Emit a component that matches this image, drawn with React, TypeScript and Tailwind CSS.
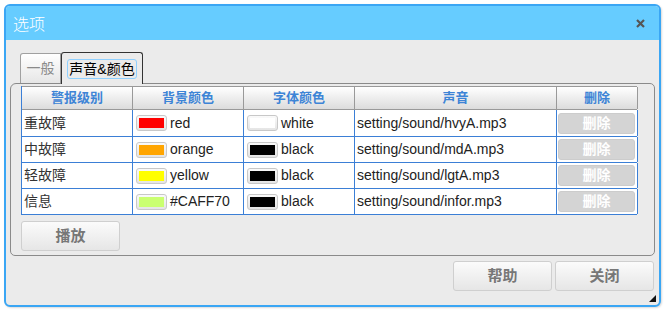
import React from "react";

const FONT = { fontFamily: '"Liberation Sans", Arial, "Noto Sans CJK SC", sans-serif' };

type Row = { level: string; bg: string; bgName: string; fg: string; fgName: string; sound: string };

const rows: Row[] = [
  { level: "重故障", bg: "#ff0000", bgName: "red", fg: "#ffffff", fgName: "white", sound: "setting/sound/hvyA.mp3" },
  { level: "中故障", bg: "#ffa500", bgName: "orange", fg: "#000000", fgName: "black", sound: "setting/sound/mdA.mp3" },
  { level: "轻故障", bg: "#ffff00", bgName: "yellow", fg: "#000000", fgName: "black", sound: "setting/sound/lgtA.mp3" },
  { level: "信息", bg: "#CAFF70", bgName: "#CAFF70", fg: "#000000", fgName: "black", sound: "setting/sound/infor.mp3" },
];

function Swatch({ color, name }: { color: string; name: string }) {
  return (
    <div className="flex items-center h-full pl-[3px]">
      <div className="w-[31px] h-[16px] rounded-[3px] border border-[#c8c8c8] bg-gradient-to-b from-[#fafafa] to-[#e4e4e4] flex items-center justify-center">
        <div className="w-[25px] h-[10px]" style={{ backgroundColor: color }} />
      </div>
      <span className="ml-[3px] text-[14px] text-[#222]">{name}</span>
    </div>
  );
}

function GrayButton({ label, w }: { label: string; w: string }) {
  return (
    <div
      className={`${w} h-[30px] rounded-[3px] border border-[#cfcfcf] bg-gradient-to-b from-[#fbfbfb] to-[#e6e6e6] flex items-center justify-center text-[15px] font-bold text-[#777]`}
    >
      {label}
    </div>
  );
}

export default function App() {
  const widths = ["w-[111px]", "w-[111px]", "w-[111px]", "w-[202px]", "w-[81px]"];
  const headers = ["警报级别", "背景颜色", "字体颜色", "声音", "删除"];
  return (
    <div className="w-[667px] h-[312px] bg-white relative" style={FONT}>
      <div className="absolute left-[4px] top-[4px] w-[657px] h-[303px] rounded-[6px] border-2 border-[#3aa6f4] bg-[#ebebeb] flex flex-col overflow-hidden shadow-[1px_1px_2px_rgba(0,0,0,0.15)]">
        {/* Title bar */}
        <div className="h-[34px] bg-[#66ccff] flex items-center justify-between pl-[7px] pr-[14px] shrink-0">
          <span className="text-white text-[16px] font-light" style={{ fontFamily: '"Noto Sans CJK SC", sans-serif' }}>
            选项
          </span>
          <svg width="9" height="9" viewBox="0 0 9 9">
            <path d="M1 1 L8 8 M8 1 L1 8" stroke="#555" strokeWidth="2.2" />
          </svg>
        </div>

        {/* Body */}
        <div className="flex-1 flex flex-col px-[4px] pt-[12px] relative">
          {/* Tabs */}
          <div className="flex items-end pl-[10px] h-[31px] relative z-10">
            <div className="w-[41px] h-[30px] border border-b-0 border-[#a0a0a0] rounded-tl-[3px] bg-gradient-to-b from-[#ffffff] to-[#e6e6e6] flex items-center justify-center text-[14px] text-[#8a8a8a]">
              一般
            </div>
            <div className="w-[82px] h-[32px] -mb-px border border-b-0 border-[#333] rounded-t-[3px] bg-[#ebebeb] flex items-center justify-center">
              <span className="px-[1px] h-[20px] leading-[18px] rounded-[3px] border border-[#8fd0ff] text-[14px] text-black">
                声音&amp;颜色
              </span>
            </div>
          </div>

          {/* Panel */}
          <div className="w-[645px] h-[173px] border border-[#8a8a8a] rounded-[5px] rounded-tl-[6px] pt-[2px] pl-[10px] flex flex-col">
            <div className="w-[616px] border-l border-[#3b7fd6]">
              {/* header */}
              <div className="flex h-[24px] border-t border-b border-[#999] bg-gradient-to-b from-[#ffffff] to-[#dcdcdc]">
                {headers.map((h, i) => (
                  <div
                    key={h}
                    className={`${widths[i]} shrink-0 border-r border-[#999] flex items-center justify-center text-[13px] font-bold text-[#3d84d6]`}
                  >
                    {h}
                  </div>
                ))}
              </div>
              {rows.map((r, idx) => (
                <div key={r.level} className={`flex ${idx === 0 ? "h-[27px]" : "h-[26px]"} border-b border-[#3b7fd6] bg-white`}>
                  <div className={`${widths[0]} shrink-0 border-r border-[#3b7fd6] flex items-center pl-[2px] text-[14px] text-[#333]`}>
                    {r.level}
                  </div>
                  <div className={`${widths[1]} shrink-0 border-r border-[#3b7fd6]`}>
                    <Swatch color={r.bg} name={r.bgName} />
                  </div>
                  <div className={`${widths[2]} shrink-0 border-r border-[#3b7fd6]`}>
                    <Swatch color={r.fg} name={r.fgName} />
                  </div>
                  <div className={`${widths[3]} shrink-0 border-r border-[#3b7fd6] flex items-center pl-[2px] text-[14px] text-[#222]`}>
                    {r.sound}
                  </div>
                  <div className={`${widths[4]} shrink-0 border-r border-[#3b7fd6] flex items-center pl-[1px]`}>
                    <div className="w-[77px] h-[21px] rounded-[3px] bg-[#d4d4d4] border border-[#cccccc] flex items-center justify-center text-[14px] font-bold text-white">
                      删除
                    </div>
                  </div>
                </div>
              ))}
            </div>
            <div className="mt-[6px]">
              <GrayButton label="播放" w="w-[99px]" />
            </div>
          </div>

          {/* Bottom buttons */}
          <div className="flex justify-end gap-[3px] pr-[1px] mt-[5px]">
            <GrayButton label="帮助" w="w-[99px]" />
            <GrayButton label="关闭" w="w-[99px]" />
          </div>

          {/* resize grip */}
          <svg className="absolute right-[3px] bottom-[3px]" width="7" height="7" viewBox="0 0 7 7">
            <path d="M7 0 L7 7 L0 7 Z" fill="#111" />
          </svg>
        </div>
      </div>
    </div>
  );
}
